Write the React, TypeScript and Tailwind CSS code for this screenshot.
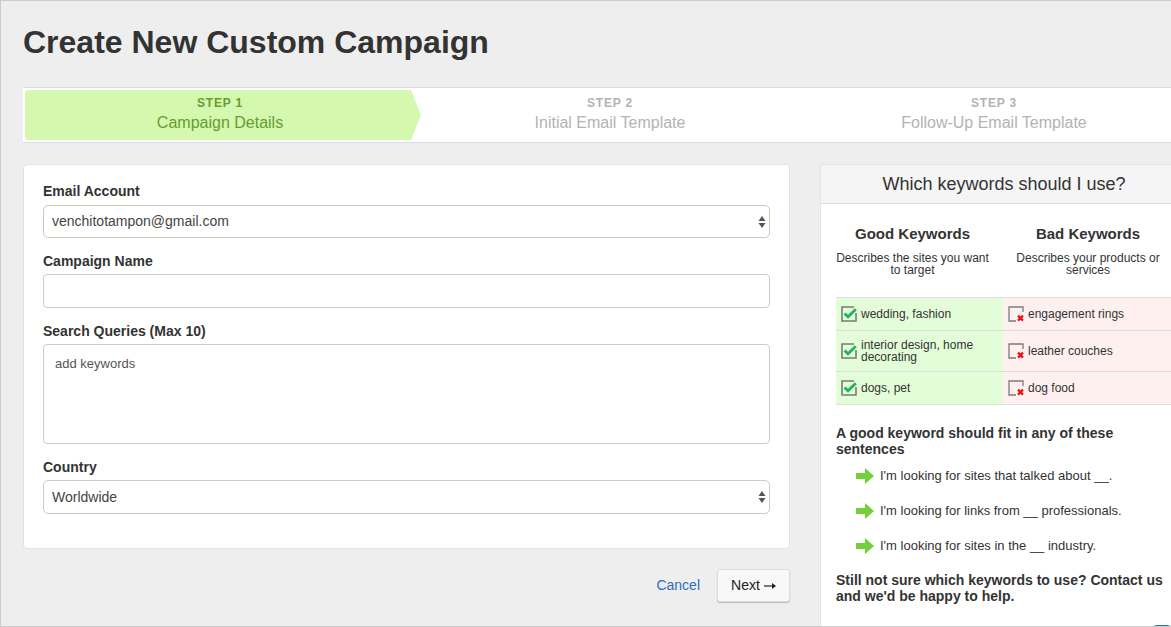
const sans = "font-['Liberation_Sans',Arial,sans-serif]";

function SelectArrows() {
  return (
    <svg width="8" height="14" viewBox="0 0 8 14" className="absolute right-[3px] top-[9px]">
      <path d="M4 1 L7.5 6 H0.5 Z" fill="#555" />
      <path d="M4 13 L7.5 8 H0.5 Z" fill="#555" />
    </svg>
  );
}

function GoodIcon() {
  return (
    <svg width="16" height="16" viewBox="0 0 16 16" className="shrink-0">
      <path d="M13 1 H1 V15 H15 V7" fill="none" stroke="#7a7a7a" strokeWidth="1.6" />
      <path d="M3.6 7.4 L7 10.8 L14.8 3.2" fill="none" stroke="#22b35e" strokeWidth="2.8" />
    </svg>
  );
}

function BadIcon() {
  return (
    <svg width="16" height="16" viewBox="0 0 16 16" className="shrink-0">
      <path d="M15 6 V1 H1 V15 H8" fill="none" stroke="#7a7a7a" strokeWidth="1.3" />
      <path d="M10 9.6 L15 14.6 M15 9.6 L10 14.6" fill="none" stroke="#ee1111" strokeWidth="2.2" />
    </svg>
  );
}

function GreenArrow() {
  return (
    <svg width="18" height="16" viewBox="0 0 18 16" className="shrink-0">
      <path d="M0 5 H9 V0 L18 8 L9 16 V11 H0 Z" fill="#74cf3a" />
    </svg>
  );
}

function Step({ step, title, className }: { step: string; title: string; className: string }) {
  return (
    <div className={`flex flex-col items-center text-center ${className}`}>
      <div className="text-[12px] leading-[14px] font-bold tracking-[0.8px]">{step}</div>
      <div className="text-[16px] leading-[20px] mt-[3px]">{title}</div>
    </div>
  );
}

function FormLabel({ children }: { children: string }) {
  return <div className="text-[14px] leading-[16px] font-bold text-[#333]">{children}</div>;
}

const rows = [
  { good: 'wedding, fashion', bad: 'engagement rings', h: 'h-[33px]' },
  { good: 'interior design, home decorating', bad: 'leather couches', h: 'h-[41px]' },
  { good: 'dogs, pet', bad: 'dog food', h: 'h-[33px]' },
];

const sentences = [
  "I'm looking for sites that talked about __.",
  "I'm looking for links from __ professionals.",
  "I'm looking for sites in the __ industry.",
];

export default function App() {
  return (
    <div className={`${sans} relative w-[1171px] h-[627px] overflow-hidden bg-[#eeeeee] border-t border-l border-b border-[#cccccc] text-[#333] pl-[22px]`}>
      <h1 className="text-[32px] leading-[38px] font-bold text-[#333] pt-[22px] h-[86px]">Create New Custom Campaign</h1>

      {/* Steps */}
      <div className="flex items-center h-[56px] bg-white border-y border-[#dddddd] pl-[2px]">
        <div className="w-[396px] h-[50px] shrink-0 bg-[#d3f8ae] rounded-l-[3px] [clip-path:polygon(0_0,386px_0,100%_50%,386px_100%,0_100%)] flex justify-center pt-[6px] pr-[6px]">
          <Step step="STEP 1" title="Campaign Details" className="text-[#659d30]" />
        </div>
        <div className="w-[378px] h-[50px] shrink-0 flex justify-center pt-[6px]">
          <Step step="STEP 2" title="Initial Email Template" className="text-[#b3b3b3]" />
        </div>
        <div className="w-[390px] h-[50px] shrink-0 flex justify-center pt-[6px]">
          <Step step="STEP 3" title="Follow-Up Email Template" className="text-[#b3b3b3]" />
        </div>
      </div>

      <div className="flex mt-[21px] items-start">
        {/* Form */}
        <div className="w-[767px] shrink-0">
          <div className="h-[385px] bg-white border border-[#e3e3e3] rounded-[4px] px-[19px] pt-[18px]">
            <FormLabel>Email Account</FormLabel>
            <div className="relative mt-[6px] h-[33px] border border-[#c9cbb5] rounded-[5px] pl-[8px] text-[14px] leading-[31px] text-[#444]">
              venchitotampon@gmail.com
              <SelectArrows />
            </div>
            <div className="mt-[15px]"><FormLabel>Campaign Name</FormLabel></div>
            <div className="mt-[5px] h-[34px] border border-[#cccccc] rounded-[4px]" />
            <div className="mt-[15px]"><FormLabel>Search Queries (Max 10)</FormLabel></div>
            <div className="mt-[5px] h-[100px] border border-[#cccccc] rounded-[4px] pl-[11px] pt-[11px] text-[13px] leading-[16px] text-[#555]">
              add keywords
            </div>
            <div className="mt-[15px]"><FormLabel>Country</FormLabel></div>
            <div className="relative mt-[5px] h-[34px] border border-[#cccccc] rounded-[5px] pl-[8px] text-[14px] leading-[32px] text-[#444]">
              Worldwide
              <SelectArrows />
            </div>
          </div>
          <div className="flex justify-end items-center mt-[20px]">
            <a className="text-[14px] text-[#2a6ebb] mr-[17px]">Cancel</a>
            <div className="w-[73px] h-[33px] flex items-center justify-center gap-[4px] bg-[#f8f8f8] border border-[#dddddd] rounded-[3px] shadow-[0_1px_1px_#bbbbbb] text-[14px] text-[#222]">
              Next
              <svg width="12" height="8" viewBox="0 0 12 8">
                <path d="M0 4 H10" fill="none" stroke="#222" strokeWidth="1.2" />
                <path d="M8 1 L12 4 L8 7 Z" fill="#222" />
              </svg>
            </div>
          </div>
        </div>

        {/* Help panel */}
        <div className="ml-[30px] w-[360px] h-[470px] shrink-0 bg-white border border-[#e3e3e3] rounded-tl-[3px]">
          <div className="h-[39px] bg-[#f5f5f5] border-b border-[#dddddd] pl-[8px] text-center text-[18px] leading-[38px] text-[#333]">
            Which keywords should I use?
          </div>
          <div className="pl-[15px]">
            <div className="flex h-[93px] pt-[21px] text-center">
              <div className="w-[153px] mr-[14px]">
                <div className="text-[15px] leading-[18px] font-bold">Good Keywords</div>
                <div className="text-[12px] leading-[12px] mt-[9px] whitespace-nowrap">Describes the sites you want<br />to target</div>
              </div>
              <div className="w-[170px]">
                <div className="text-[15px] leading-[18px] font-bold">Bad Keywords</div>
                <div className="text-[12px] leading-[12px] mt-[9px]">Describes your products or<br />services</div>
              </div>
            </div>
            <div className="border-t border-[#dddddd]">
              {rows.map((r) => (
                <div key={r.good} className={`flex border-b border-[#dddddd] text-[12px] leading-[12px] text-[#333] ${r.h}`}>
                  <div className="w-[167px] bg-[#e4fdd9] flex items-center pl-[5px] gap-[4px]">
                    <GoodIcon />
                    <span className="pr-[16px]">{r.good}</span>
                  </div>
                  <div className="w-[168px] bg-[#fff0f0] flex items-center pl-[5px] gap-[4px]">
                    <BadIcon />
                    <span>{r.bad}</span>
                  </div>
                </div>
              ))}
            </div>
            <div className="w-[320px] mt-[20px] text-[14px] leading-[16px] font-bold">
              A good keyword should fit in any of these sentences
            </div>
            <div className="mt-[1px] pl-[20px]">
              {sentences.map((s) => (
                <div key={s} className="flex items-center gap-[6px] h-[35px] text-[13px]">
                  <GreenArrow />
                  <span>{s}</span>
                </div>
              ))}
            </div>
            <div className="w-[330px] mt-[9px] text-[14px] leading-[16px] font-bold">
              Still not sure which keywords to use? Contact us and we'd be happy to help.
            </div>
          </div>
        </div>
      </div>

      <div className="absolute right-[-1px] bottom-[-9px] w-[20px] h-[10px] rounded-full bg-[#1b75bc]" />
    </div>
  );
}
